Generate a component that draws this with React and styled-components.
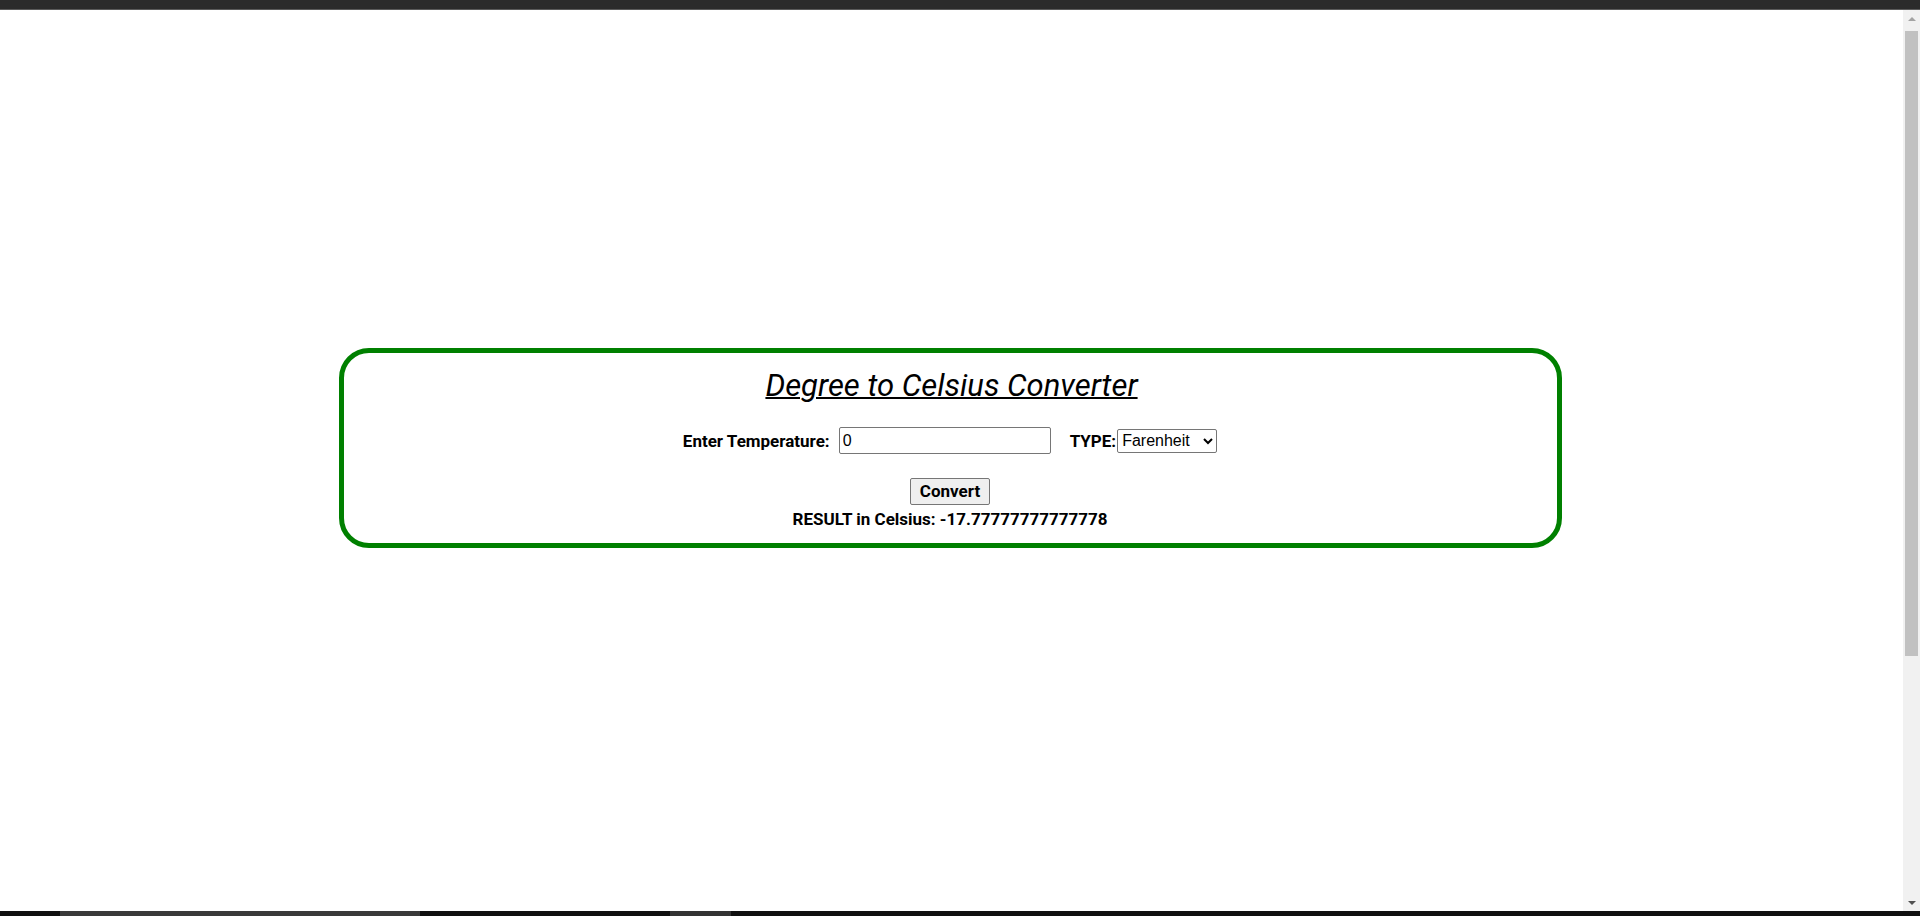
import React, { useState } from "react";
import styled, { createGlobalStyle } from "styled-components";

const Global = createGlobalStyle`
  html, body { margin: 0; padding: 0; height: 100%; overflow: hidden; background: #fff; }
  #root { height: 100%; }
  * { box-sizing: border-box; }
`;

const Frame = styled.div`
  display: flex;
  flex-direction: column;
  height: 100vh;
  font-family: Roboto, "Liberation Sans", sans-serif;
  color: #000;
`;

const TopBar = styled.div`
  flex: none;
  height: 10px;
  background: #2b2b2b;
  border-bottom: 1px solid #5a5a5a;
`;

const Body = styled.div`
  flex: 1;
  display: flex;
  min-height: 0;
`;

const Page = styled.main`
  flex: 1;
  padding: 338px 3px 0 0;
  background: #fff;
`;

const Scrollbar = styled.div`
  flex: none;
  width: 17px;
  background: #f1f1f1;
  display: flex;
  flex-direction: column;
  align-items: center;
`;

const ArrowButton = styled.div`
  flex: none;
  height: 17px;
  width: 17px;
  display: flex;
  align-items: center;
  justify-content: center;
  &::before {
    content: "";
    width: 0;
    height: 0;
    border-left: 4px solid transparent;
    border-right: 4px solid transparent;
    ${(p) =>
      p.$down
        ? "border-top: 4px solid #505050;"
        : "border-bottom: 4px solid #a3a3a3;"}
  }
`;

const Thumb = styled.div`
  flex: none;
  width: 13px;
  height: 625px;
  margin-top: 4px;
  background: #c1c1c1;
`;

const Track = styled.div`
  flex: 1;
`;

const BottomBar = styled.div`
  flex: none;
  height: 5px;
  display: flex;
  background: #101010;
`;

const TaskSegment = styled.div`
  flex: none;
  width: ${(p) => p.$w}px;
  background: ${(p) => p.$bg};
`;

const Card = styled.section`
  width: 1223px;
  height: 200px;
  margin: 0 auto;
  border: 5px solid #008000;
  border-radius: 30px;
  display: flex;
  flex-direction: column;
  align-items: center;
  padding-top: 15px;
`;

const Title = styled.h1`
  margin: 0 0 0 3px;
  font-family: Roboto, "Liberation Sans", sans-serif;
  font-style: italic;
  font-weight: 400;
  font-size: 31px;
  line-height: 1.172;
  text-decoration: underline;
  text-decoration-thickness: 2px;
`;

const Row = styled.div`
  display: flex;
  align-items: center;
  margin-top: 23px;
`;

const Label = styled.label`
  font-weight: 700;
  font-size: 17px;
  margin-right: ${(p) => p.$gap}px;
`;

const TempInput = styled.input`
  width: 212px;
  height: 27px;
  margin: 0 19px 0 0;
  padding: 1px 3px;
  border: 1px solid #767676;
  border-radius: 2px;
  font-family: "Liberation Sans", Arial, sans-serif;
  font-size: 16px;
  color: #000;
  background: #fff;
`;

const TypeSelect = styled.select`
  width: 100px;
  height: 24px;
  margin: 0 0 0 1px;
  border: 1px solid #767676;
  border-radius: 2px;
  font-family: "Liberation Sans", Arial, sans-serif;
  font-size: 16px;
  color: #000;
  background: #fff;
`;

const ConvertButton = styled.button`
  margin-top: 24px;
  height: 27px;
  padding: 1px 9px;
  border: 1px solid #767676;
  border-radius: 2px;
  background: #efefef;
  font-family: Roboto, "Liberation Sans", sans-serif;
  font-weight: 700;
  font-size: 17px;
  line-height: 1;
  color: #000;
`;

const Result = styled.div`
  margin-top: 4px;
  font-weight: 700;
  font-size: 17px;
`;

const segments = [
  { w: 60, bg: "#101010" },
  { w: 360, bg: "#3a3a3a" },
  { w: 250, bg: "#101010" },
  { w: 61, bg: "#333333" },
];

function convert(value, type) {
  const v = parseFloat(value);
  if (isNaN(v)) return "";
  if (type === "farenheit") return String(((v - 32) * 5) / 9);
  if (type === "kelvin") return String(v - 273.15);
  return String(v);
}

export default function App() {
  const [temp, setTemp] = useState("0");
  const [type, setType] = useState("farenheit");
  const [result, setResult] = useState(convert("0", "farenheit"));

  return (
    <Frame>
      <Global />
      <TopBar />
      <Body>
        <Page>
          <Card>
            <Title>Degree to Celsius Converter</Title>
            <Row>
              <Label htmlFor="temp" $gap={9}>Enter Temperature:</Label>
              <TempInput
                id="temp"
                type="text"
                value={temp}
                onChange={(e) => setTemp(e.target.value)}
              />
              <Label htmlFor="type" $gap={0}>TYPE:</Label>
              <TypeSelect
                id="type"
                value={type}
                onChange={(e) => setType(e.target.value)}
              >
                <option value="farenheit">Farenheit</option>
                <option value="kelvin">Kelvin</option>
                <option value="celsius">Celsius</option>
              </TypeSelect>
            </Row>
            <ConvertButton onClick={() => setResult(convert(temp, type))}>
              Convert
            </ConvertButton>
            <Result>RESULT in Celsius: {result}</Result>
          </Card>
        </Page>
        <Scrollbar>
          <ArrowButton />
          <Thumb />
          <Track />
          <ArrowButton $down />
        </Scrollbar>
      </Body>
      <BottomBar>
        {segments.map((s, i) => (
          <TaskSegment key={i} $w={s.w} $bg={s.bg} />
        ))}
      </BottomBar>
    </Frame>
  );
}
